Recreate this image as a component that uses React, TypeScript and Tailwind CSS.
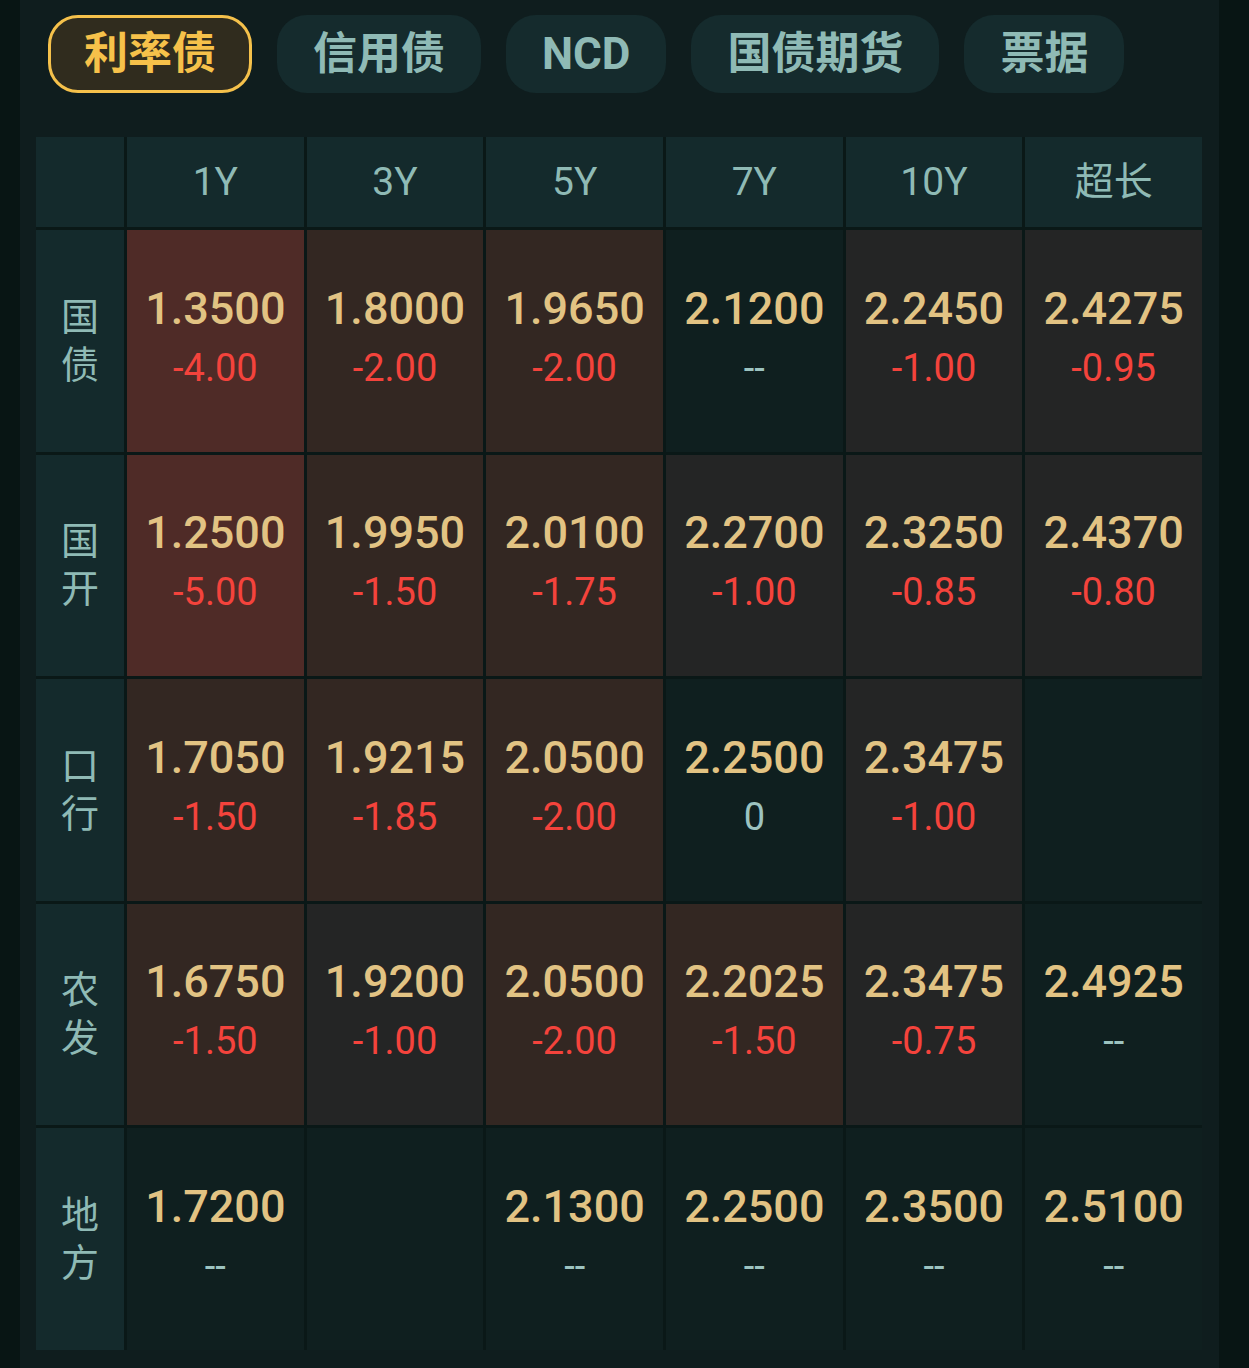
import React, { useState } from 'react'

type Cell = { v: string; c: string } | null

const TABS = ['利率债', '信用债', 'NCD', '国债期货', '票据']
const TERMS = ['1Y', '3Y', '5Y', '7Y', '10Y', '超长']

const ROWS: { name: string; cells: Cell[] }[] = [
  {
    name: '国债',
    cells: [
      { v: '1.3500', c: '-4.00' },
      { v: '1.8000', c: '-2.00' },
      { v: '1.9650', c: '-2.00' },
      { v: '2.1200', c: '--' },
      { v: '2.2450', c: '-1.00' },
      { v: '2.4275', c: '-0.95' },
    ],
  },
  {
    name: '国开',
    cells: [
      { v: '1.2500', c: '-5.00' },
      { v: '1.9950', c: '-1.50' },
      { v: '2.0100', c: '-1.75' },
      { v: '2.2700', c: '-1.00' },
      { v: '2.3250', c: '-0.85' },
      { v: '2.4370', c: '-0.80' },
    ],
  },
  {
    name: '口行',
    cells: [
      { v: '1.7050', c: '-1.50' },
      { v: '1.9215', c: '-1.85' },
      { v: '2.0500', c: '-2.00' },
      { v: '2.2500', c: '0' },
      { v: '2.3475', c: '-1.00' },
      null,
    ],
  },
  {
    name: '农发',
    cells: [
      { v: '1.6750', c: '-1.50' },
      { v: '1.9200', c: '-1.00' },
      { v: '2.0500', c: '-2.00' },
      { v: '2.2025', c: '-1.50' },
      { v: '2.3475', c: '-0.75' },
      { v: '2.4925', c: '--' },
    ],
  },
  {
    name: '地方',
    cells: [
      { v: '1.7200', c: '--' },
      null,
      { v: '2.1300', c: '--' },
      { v: '2.2500', c: '--' },
      { v: '2.3500', c: '--' },
      { v: '2.5100', c: '--' },
    ],
  },
]

// background shade by size of the move
function cellBg(cell: Cell) {
  if (!cell) return 'bg-[#0f1f1f]'
  const n = Number(cell.c)
  if (cell.c === '--' || !n) return 'bg-[#0f1f1f]'
  const abs = Math.abs(n)
  if (abs >= 3) return 'bg-[#4f2b27]'
  if (abs > 1) return 'bg-[#332722]'
  return 'bg-[#242525]'
}

const FONT = { fontFamily: "Roboto, 'Noto Sans CJK SC', sans-serif" }

export default function App() {
  const [active, setActive] = useState(0)

  return (
    <div className="flex h-[1368px] w-full bg-[#081514]" style={FONT}>
      <div className="ml-[20px] w-[1199px] bg-[#0f1d1e]">
        <div className="flex gap-[25px] pl-[28px] pt-[15px]">
          {TABS.map((t, i) => (
            <button
              key={t}
              onClick={() => setActive(i)}
              className={`flex h-[78px] items-center rounded-[30px] border-[3px] px-[33px] text-[44px] font-bold leading-none ${
                active === i
                  ? 'border-[#f5c14b] bg-[#302c1e] text-[#f6c14a]'
                  : 'border-transparent bg-[#152b2d] text-[#8fbab5]'
              }`}
            >
              {t}
            </button>
          ))}
        </div>

        <div className="ml-[16px] mt-[44px] grid w-[1166px] grid-cols-[88px_repeat(6,1fr)] grid-rows-[90px_repeat(5,221.5px)] gap-[3px] bg-[#0a1817]">
          <div className="bg-[#142a2c]" />
          {TERMS.map(t => (
            <div
              key={t}
              className="flex items-center justify-center bg-[#142a2c] text-[39px] text-[#8fbab5]"
            >
              {t}
            </div>
          ))}

          {ROWS.map(row => (
            <React.Fragment key={row.name}>
              <div className="flex flex-col items-center justify-center bg-[#142a2c] text-[38px] leading-[48px] text-[#8fbab5]">
                {row.name.split('').map(ch => (
                  <span key={ch}>{ch}</span>
                ))}
              </div>
              {row.cells.map((cell, i) => (
                <div
                  key={i}
                  className={`flex flex-col items-center justify-center pb-[2px] ${cellBg(cell)}`}
                >
                  {cell && (
                    <>
                      <span className="text-[45px] font-medium leading-[56px] text-[#e2c383]">
                        {cell.v}
                      </span>
                      <span
                        className={`text-[38px] leading-[62px] ${
                          cell.c.startsWith('-') && cell.c !== '--'
                            ? 'text-[#f4433c]'
                            : 'text-[#9cc3c0]'
                        }`}
                      >
                        {cell.c}
                      </span>
                    </>
                  )}
                </div>
              ))}
            </React.Fragment>
          ))}
        </div>
      </div>
    </div>
  )
}
